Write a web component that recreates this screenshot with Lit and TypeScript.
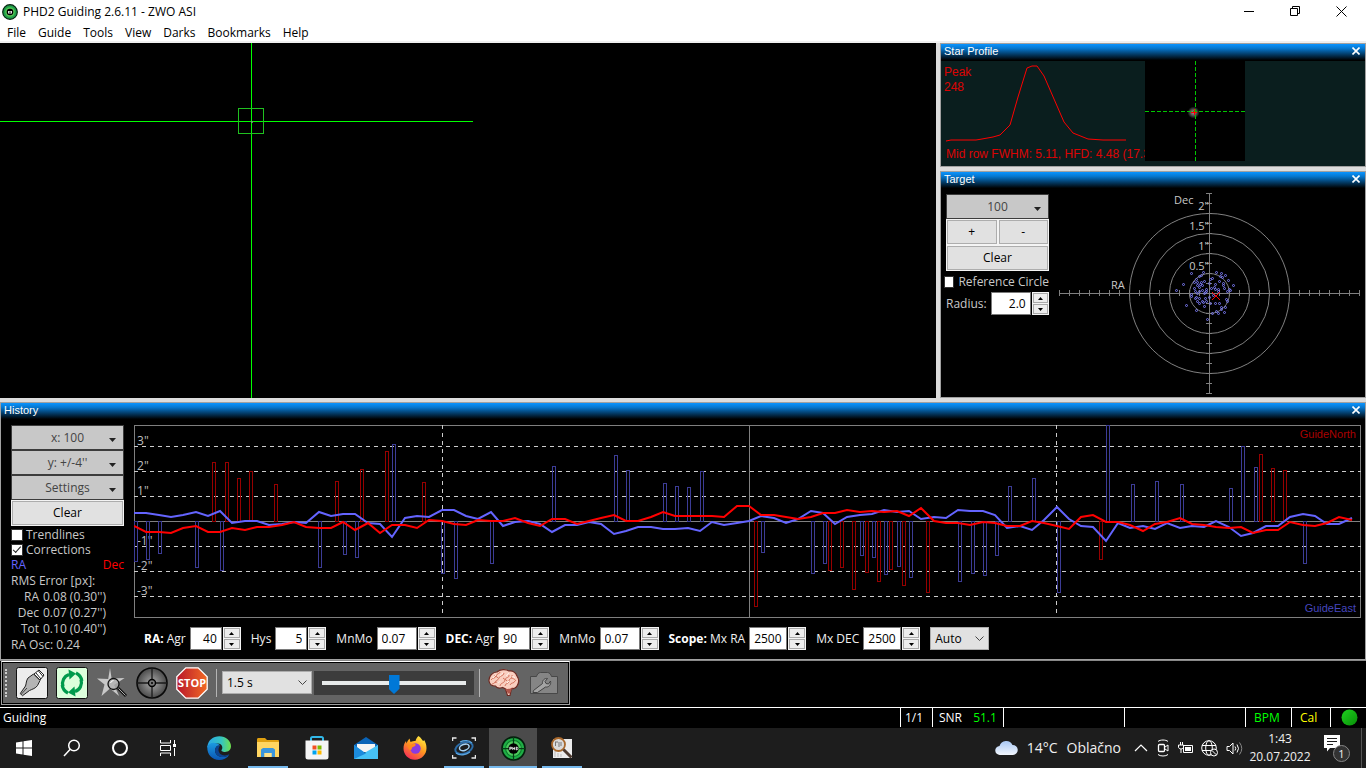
import { LitElement, html, svg, css } from "lit";
import { customElement, property } from "lit/decorators.js";

const base = css`
  *, *::before, *::after { box-sizing: border-box; }
  button, input, select { font: inherit; margin: 0; padding: 0; border-radius: 0; }
  svg { display: block; flex: none; }
`;

/* ---------- data ---------- */

const STEP = 12.3;
const RA = [88, 88, 90, 92, 90, 87, 91, 86, 98, 96, 96, 100, 99, 97, 98, 87, 91, 89, 89, 98, 99, 112, 93, 91, 92, 85, 85, 91, 94, 87, 101, 97, 96, 99, 107, 100, 100, 97, 99, 109, 106, 102, 102, 104, 104, 103, 106, 97, 100, 98, 96, 91, 93, 98, 94, 86, 88, 99, 92, 90, 89, 85, 87, 86, 94, 92, 93, 85, 86, 86, 90, 103, 101, 105, 95, 82, 94, 101, 102, 116, 98, 103, 101, 104, 98, 103, 101, 102, 96, 102, 111, 108, 101, 101, 92, 89, 91, 99, 99, 93];
const DEC = [101, 107, 107, 108, 103, 101, 107, 107, 103, 105, 102, 102, 100, 97, 102, 103, 103, 97, 105, 98, 108, 100, 100, 103, 95, 96, 99, 100, 95, 96, 96, 93, 98, 101, 94, 94, 99, 96, 93, 90, 96, 96, 92, 87, 91, 91, 91, 91, 92, 81, 81, 90, 90, 92, 94, 92, 88, 88, 85, 87, 86, 87, 86, 91, 83, 96, 98, 98, 100, 97, 98, 101, 101, 96, 98, 101, 104, 92, 90, 97, 97, 100, 106, 99, 97, 93, 99, 100, 102, 103, 102, 108, 105, 105, 97, 100, 101, 98, 92, 95];
const ZERO = 96;
const RA_PULSES: number[][] = [[0, 136], [12, 134], [24, 128], [61, 142], [86, 145], [184, 142], [209, 129], [221, 132], [307, 148], [320, 153], [356, 138], [258, 19], [418, 41], [480, 30], [492, 45], [529, 58], [541, 61], [553, 62], [566, 46], [627, 127], [677, 148], [689, 138], [726, 130], [738, 132], [750, 149], [763, 141], [775, 152], [824, 156], [837, 148], [849, 150], [861, 130], [874, 61], [898, 53], [972, 0], [997, 59], [1021, 56], [1046, 59], [1095, 63], [1107, 21], [1120, 42], [923, 167], [1169, 138]];
const DEC_PULSES: number[][] = [[78, 37], [91, 37], [103, 53], [115, 46], [140, 59], [201, 56], [226, 44], [251, 26], [288, 57], [620, 181], [694, 145], [706, 142], [718, 164], [731, 147], [743, 156], [755, 144], [768, 160], [792, 167], [965, 134], [1125, 29], [1137, 43], [1149, 45]];
const SCATTER: number[][] = [[-18, -20], [-6, -21], [7, -21], [12, -20], [16, -18], [-10, -17], [11, -17], [-13, -14], [3, -15], [-5, -12], [10, -12], [19, -13], [-12, -11], [-8, -11], [0, -10], [14, -10], [-26, -9], [-12, -8], [-7, -8], [6, -9], [24, -8], [14, -8], [-33, -3], [-15, -5], [-10, -6], [-3, -4], [2, -5], [6, -4], [9, -4], [15, -5], [20, -4], [-14, -2], [-10, -2], [-7, -3], [-3, -2], [9, -2], [18, -2], [-18, 1], [-12, 0], [-5, 0], [4, 2], [0, 4], [-18, 3], [-14, 5], [-10, 5], [-7, 8], [-4, 5], [17, 6], [-12, 8], [-10, 10], [-6, 9], [-3, 8], [-23, 12], [-5, 13], [1, 10], [6, 10], [10, 10], [16, 14], [12, 16], [-13, 17], [15, 19], [3, 20], [7, 18], [-2, 26], [12, 14], [9, 20], [-15, -11], [-4, -1], [18, 8], [13, -16], [1, -14], [5, -6], [-9, -9], [-13, 4], [-8, -18], [21, -3]];

const points = (ys: number[]) => ys.map((y, i) => `${Math.round(i * STEP)},${y}`).join(" ");
const pulses = (list: number[][], cls: string) =>
  list.map(([x, y]) => svg`<rect class=${cls} x=${x + 0.5} y=${Math.min(y, ZERO) + 0.5} width="3" height=${Math.abs(y - ZERO)}></rect>`);

/* ---------- small widgets ---------- */

@customElement("dock-panel")
export class DockPanel extends LitElement {
  @property() caption = "";
  static styles = [base, css`
    :host { display: flex; flex-direction: column; border: 1px solid #a0a0a0; background: #000; min-width: 0; }
    .bar { display: flex; align-items: center; justify-content: space-between; height: 17px; padding: 0 4px 3px 3px;
      background: linear-gradient(#0a94ff, #0678d0 25%, #000 95%); color: #fff; font: 11px/14px "Liberation Sans", sans-serif; }
    .close { border: 0; background: none; width: 10px; height: 10px; padding: 1px; }
    .body { flex: 1; min-height: 0; display: flex; }
  `];
  render() {
    return html`
      <div class="bar"><span>${this.caption}</span>
        <button class="close" aria-label="Close ${this.caption}">
          <svg width="8" height="8"><path d="M.5.5l7 7M7.5.5l-7 7" stroke="#fff" stroke-width="1.6"/></svg>
        </button></div>
      <div class="body"><slot></slot></div>`;
  }
}

@customElement("spin-box")
export class SpinBox extends LitElement {
  @property() label = "";
  @property() lead = "";
  @property() value = "";
  @property() size = "s";
  @property() align = "left";
  static styles = [base, css`
    :host { display: flex; align-items: center; }
    .label { white-space: nowrap; margin-right: 4px; }
    .lead { color: #fff; font-weight: 700; }
    .field { height: 23px; border: 1px solid #7a7a7a; background: #fff; color: #000; padding: 0 4px; outline: 0; }
    .s { width: 32px; } .m { width: 38px; } .l { width: 40px; }
    .right { text-align: right; }
    .spin { display: grid; grid-template-rows: 1fr 1fr; width: 18px; height: 23px; margin-left: 1px; background: #f4f4f4; padding: 1px; gap: 1px; }
    .step { border: 1px solid #a9a9a9; background: #ededed; display: grid; place-items: center; min-height: 0; }
  `];
  render() {
    return html`
      <label class="label" for="v">${this.lead ? html`<span class="lead">${this.lead}</span> ` : ""}${this.label}</label>
      <input id="v" class="field ${this.size} ${this.align}" .value=${this.value}>
      <span class="spin">
        <button class="step" aria-label="Increase"><svg width="5" height="3"><path d="M0 3L2.5 0 5 3z"/></svg></button>
        <button class="step" aria-label="Decrease"><svg width="5" height="3"><path d="M0 0L2.5 3 5 0z"/></svg></button>
      </span>`;
  }
}

/* ---------- icons ---------- */

const appLogo = html`<svg width="16" height="16" viewBox="0 0 16 16">
  <circle cx="8" cy="8" r="7.300" fill="#1f9e4a" stroke="#06240f" stroke-width="1.200"/>
  <circle cx="8" cy="8" r="4.800" fill="#52c552"/>
  <circle cx="8" cy="8" r="3.300" fill="#000"/>
  <path d="M6 7h4v2.500H6z" fill="#ddd"/><path d="M7.500 7.500h1v1.500h-1z"/></svg>`;
const phdLogo = html`<svg width="25" height="25" viewBox="0 0 24 24">
  <circle cx="12" cy="12" r="11" fill="#1fae45" stroke="#03200c" stroke-width="1.6"/>
  <circle cx="12" cy="12" r="7.6" fill="#4cc95c" stroke="#0a7a2c"/>
  <path d="M12 1v22M1 12h22" stroke="#063d16" stroke-width="1.2"/>
  <circle cx="12" cy="12" r="5" fill="#000"/>
  <path d="M8.5 10.5v3M8.5 10.8h1.6v1.4H8.5M11.3 10.5v3M13.2 10.5v3M11.3 12h2M14.8 10.6v2.8c2 0 2-2.8 0-2.8" stroke="#fff" stroke-width=".8" fill="none"/></svg>`;

const cableIcon = html`<svg width="32" height="32" viewBox="0 0 32 32">
  <rect x=".5" y=".5" width="31" height="31" rx="2" fill="#ececec" stroke="#111"/>
  <path d="M18 7L23 3l5 5-4 5z" fill="#fff" stroke="#222"/><path d="M20 6l5 6M22.500 4l4.500 5.500" stroke="#222"/>
  <path d="M17.500 7l6.500 6.500-2.500 5c-2 3-5 3.500-8 5l-7 5.200-2.200-2.200L9.500 19c1-3 .5-5 2.500-8z" fill="#b4b4b4" stroke="#222"/>
  <path d="M5 27.500l6-6.500" stroke="#444"/></svg>`;
const loopIcon = html`<svg width="32" height="32" viewBox="0 0 32 32">
  <rect x=".5" y=".5" width="31" height="31" rx="2" fill="#dcffdc" stroke="#111"/>
  <g fill="none" stroke="#009a4c" stroke-width="3.200"><path d="M7 19.500A9.500 9.500 0 0 1 13 7.500"/><path d="M20 6A10.300 10.300 0 0 1 25.800 14"/><path d="M12 26A10.300 10.300 0 0 1 6.200 18"/><path d="M25 12.500A9.500 9.500 0 0 1 19 24.500"/></g>
  <path d="M12.500 2.500l7.500 4-6.500 6zM19.500 29.500l-7.500-4 6.500-6z" fill="#009a4c"/></svg>`;
const starIcon = html`<svg width="32" height="32" viewBox="0 0 32 32">
  <path d="M14 1l1.600 10.500 13-.5-10.500 7 5 11L14 21.500 5.500 29l3-11.500L1 11.500l11.200.5z" fill="#c8c8c8"/>
  <path d="M22 21l8 8" stroke="#111" stroke-width="3"/><path d="M22.500 21.500l7 7" stroke="#aaa" stroke-width="1"/>
  <circle cx="17.500" cy="17" r="5.500" fill="#b0b0b0" fill-opacity=".8" stroke="#111" stroke-width="1.300"/>
  <path d="M14.500 16a3.500 3.500 0 0 1 3-2.500" stroke="#fff" fill="none"/></svg>`;
const aimIcon = html`<svg width="32" height="32" viewBox="0 0 32 32">
  <defs><radialGradient id="ag"><stop offset="0" stop-color="#aaa"/><stop offset="1" stop-color="#4a4a4a"/></radialGradient></defs>
  <circle cx="16" cy="16" r="15" fill="url(#ag)" stroke="#0a0a0a" stroke-width="1.600"/>
  <path d="M16 1v30M1 16h30" stroke="#1a1a1a" stroke-width="1.300"/>
  <circle cx="16" cy="16" r="3.500" fill="#777" stroke="#000" stroke-width="1.400"/><circle cx="16" cy="16" r="1" fill="#000"/></svg>`;
const stopIcon = html`<svg width="32" height="32" viewBox="0 0 32 32">
  <defs><linearGradient id="sg"><stop offset="0" stop-color="#b8172c"/><stop offset="1" stop-color="#f26a24"/></linearGradient></defs>
  <path d="M9.800.8h12.400l9 9v12.400l-9 9H9.800l-9-9V9.800z" fill="url(#sg)" stroke="#fff" stroke-width="1.300"/>
  <text x="16" y="20" text-anchor="middle" font-family="Open Sans, sans-serif" font-size="11" font-weight="700" fill="#fff">STOP</text></svg>`;
const brainIcon = html`<svg width="32" height="28" viewBox="0 0 32 28">
  <path d="M1 12C.5 7 5 3 9 3c3-3 9-3 12-1 4-.5 7 2 8 5 2 3 2 7 0 10-1 2-4 3-5.500 2.500L22 26.500h-2.500l-2-6.500-3-1.500c-3 1-6 .5-7-1.500C4 17 1.500 15 1 12z" fill="#f9cfc0" stroke="#6e2a22" stroke-width="1.200"/>
  <path d="M3 11c2-3 4-1 5-4s4-2 4-4M7 14c0-3 3-2 4-5s4-1 5-5M12 17c1-4 4-2 5-6s4-1 4-5M17 17c0-3 4-2 4-5s4-2 3-6M22 16c1-3 4-1 5-4M6 6c1 2 3 1 4 3M15 9c2 2 3 1 4 3M23 9c2 1 3 0 5 3M4 15c2 0 2-2 5-2" fill="none" stroke="#cf6a54" stroke-width=".9"/>
  <path d="M5 9c1-2 2-2 3-3M12 7c1-1 1-2 3-3M18 7c1 0 1-2 3-3M24 8c1-1 2 0 3 1M10 14c1-1 2-1 2-2M19 14l2-2" fill="none" stroke="#fff6f0"/>
  <path d="M17 19.500c3 1 7 0 9-2l-2.500 3-1.500 4h-2z" fill="#b0554a"/></svg>`;
const camIcon = html`<svg width="28" height="22" viewBox="0 0 28 22">
  <path d="M.5 4.500h6c.5-2 2-4 4-4h7c2 0 3.500 2 4 4h6v17H.5z" fill="#858585" stroke="#484848"/>
  <path d="M3.500 18.500l9-7c-.5-3 2-5.500 5-5l-2.500 3 1 2 2.500.5 2-3c1 4-2 6.500-5 6l-8 5.500H3z" fill="#a4a4a4" stroke="#424242"/></svg>`;

const task = {
  start: html`<svg width="18" height="18"><path d="M1 3.500l6.500-1v6H1zM8.500 2.300L17 1v7.500H8.500zM1 9.500h6.500v6l-6.500-1zM8.500 9.500H17V17l-8.500-1.300z" fill="#fff"/></svg>`,
  search: html`<svg width="18" height="18" fill="none" stroke="#fff" stroke-width="1.500"><circle cx="11" cy="6.500" r="5.300"/><path d="M7.200 10.300L1 17"/></svg>`,
  cortana: html`<svg width="18" height="18"><circle cx="9" cy="9" r="7" fill="none" stroke="#fff" stroke-width="2"/></svg>`,
  view: html`<svg width="18" height="18" fill="none" stroke="#fff"><path d="M1.500 1v3h10V1M1.500 17v-3h10v3M1.500 6.500h10v5h-10zM15.500 1v4M15.500 9v8"/><path d="M14 5h3v3h-3z" fill="#fff" stroke="none"/></svg>`,
  edge: html`<svg width="24" height="24"><defs><linearGradient id="e1" x1="0" x2="1"><stop offset="0" stop-color="#2aa7e8"/><stop offset=".6" stop-color="#35c5c0"/><stop offset="1" stop-color="#6fe04c"/></linearGradient><linearGradient id="e2" x2="0" y2="1"><stop offset="0" stop-color="#1c9be0"/><stop offset="1" stop-color="#0a55b5"/></linearGradient></defs>
    <path d="M.3 10.500C1.500 4 6 .3 12.300.3 19 .3 24 5 24 10.300c0 3.700-3 5.700-6 5.700-2.500 0-4.300-1-3.300-2.200 1.500-2 .5-6-3.700-6.300C6.500 7 1.500 8.500.3 12z" fill="url(#e1)"/>
    <path d="M.3 11C1 8.500 4 6.600 7.500 6.900 10 7 12 8 13 9.500c-2.500-.5-5 1.500-5 5 0 4 4 7 9 6.500 2-.2 3.500-.8 5-1.700-2 3.200-6 4.700-9.700 4.700C5 24 0 18.500.3 11z" fill="url(#e2)"/>
    <path d="M8 14.500c0 4 4 7 9 6.500 2-.2 3.500-.8 5-1.700.6-.7-.2-.9-1-.5-5 2-9-.5-9.500-4.500-.1-2 .6-3.500 1.500-4.800-2.500-.5-5 1.500-5 5z" fill="#0c4391"/></svg>`,
  folder: html`<svg width="22" height="20"><path d="M0 3V1.500C0 .7.500 0 1.500 0H8l2 2h11a1 1 0 0 1 1 1v3H0z" fill="#e0a010"/><path d="M0 4h22v15H0z" fill="#ffd561"/><path d="M4 19v-7.500L6 10h10l2 1.500V19h-3.500v-4h-7v4z" fill="#3a96dd"/><path d="M7.500 15h7v4h-7z" fill="#ffe28a"/></svg>`,
  store: html`<svg width="24" height="24"><path d="M6 5V2.500A1.500 1.500 0 0 1 7.500 1h9A1.500 1.500 0 0 1 18 2.500V5" fill="none" stroke="#32b8e8" stroke-width="2"/><path d="M.5 4.500h23V21a2.500 2.500 0 0 1-2.500 2.500H3A2.500 2.500 0 0 1 .5 21z" fill="#f5f5f5"/><path d="M7.500 9.500h4v4h-4z" fill="#f25022"/><path d="M12.500 9.500h4v4h-4z" fill="#7fba00"/><path d="M7.500 14.500h4v4h-4z" fill="#00a4ef"/><path d="M12.500 14.500h4v4h-4z" fill="#ffb900"/></svg>`,
  mail: html`<svg width="24" height="22"><path d="M0 8L12 0l12 8v4H0z" fill="#0a64b8"/><path d="M3 7h18v8H3z" fill="#f4f4f4"/><path d="M0 8l12 9L24 8v14H0z" fill="#2fa8ea"/><path d="M24 8v14H0z" fill="#46c2f6"/><path d="M0 22V8l12 8.500z" fill="#1c8bdc"/></svg>`,
  firefox: html`<svg width="24" height="24"><defs><linearGradient id="f1" x1=".8" y1="0" x2=".2" y2="1"><stop offset="0" stop-color="#fff044"/><stop offset=".45" stop-color="#ff9a1f"/><stop offset="1" stop-color="#f5245c"/></linearGradient></defs>
    <path d="M15.500 0c3 2 3.500 4 4.500 5 1-.2 1-.8 1-1.200 1.600 2.500 2.500 5 2.500 8.500C23.500 18.500 18.500 23.800 12 23.800S.5 18.500.5 12.500c0-3.500 1-5.500 2.500-7.500l.5 2.500C4.500 5.500 5 4 6.500 2.500L7.500 6c2-1 3-1 5-1 .5-2 1.500-4 3-5z" fill="url(#f1)"/>
    <circle cx="12.500" cy="12.500" r="5.200" fill="#8a3ae0"/><path d="M4 9c3 0 5 0 7-1.500 2 .2 2 1.500 1 2.500l-3 1.500c0 2-1 3-3 2z" fill="#ff8a1c"/></svg>`,
  asi: html`<svg width="24" height="22" fill="none"><path d="M.5 4V1h4M19.500 1h4v3M.5 18v3h4M19.500 21h4v-3" stroke="#e8e8e8" stroke-width="1.500"/><ellipse cx="12" cy="11" rx="9" ry="5.500" transform="rotate(-20 12 11)" stroke="#2b6ca8" stroke-width="2"/><ellipse cx="12.500" cy="10.500" rx="5" ry="3" transform="rotate(-20 12 11)" stroke="#a7d3f5" stroke-width="1.500"/><path d="M4 16c4 3 10 2 14-1M8 5c4-2 9-2 12 1" stroke="#5aa5e0" stroke-width="1.300"/></svg>`,
  log: html`<svg width="22" height="22"><path d="M2 2h19v19H2z" fill="#ececec"/><path d="M4 20V14M7 20v-4M10 20v-3" stroke="#bbb"/><circle cx="7.500" cy="7.500" r="6.500" fill="#d8d8d8" fill-opacity=".9" stroke="#a8682c" stroke-width="1.800"/><path d="M4.500 5v4M4 5h3M8 5v5M10 5v4" stroke="#777"/><path d="M12.500 12.500l8 8" stroke="#4c3a30" stroke-width="3"/></svg>`,
};

/* ---------- page ---------- */

@customElement("app-root")
export class AppRoot extends LitElement {
  static styles = [base, css`
    :host { display: flex; flex-direction: column; min-height: 100vh; background: #dcdcdc; color: #c8c8c8;
      font: 12px/16px "Open Sans", "Noto Sans", sans-serif; }

    .title { display: flex; align-items: center; height: 23px; background: #fff; color: #000; padding: 0 2px; }
    .title-text { flex: 1; margin-left: 5px; }
    .win { width: 46px; height: 22px; border: 0; background: none; display: grid; place-items: center; }
    .menu { display: flex; gap: 12px; height: 20px; padding: 0 7px; background: #fff; border-bottom: 2px solid #f0f0f0; }
    .menu-item { color: #000; text-decoration: none; line-height: 19px; }

    .work { flex: 1; display: grid; grid-template-columns: minmax(0, 1fr) 426px; gap: 4px; min-height: 355px; }
    .view { background: #000; width: 100%; height: 100%; }
    .side { display: grid; grid-template-rows: 124px minmax(0, 1fr); gap: 4px; }

    .profile { flex: 1; display: flex; background: #0a1e1e; color: #f00; font: 12px/15px "Liberation Sans", sans-serif; overflow: hidden; }
    .curve { position: relative; width: 204px; overflow: hidden; padding: 4px 3px; }
    .curve-svg { position: absolute; left: 0; top: 0; }
    .peak { opacity: .85; }
    .fwhm { position: absolute; left: 5px; top: 86px; white-space: nowrap; opacity: .85; }

    .target { flex: 1; display: flex; padding: 4px 4px 1px 5px; justify-content: space-between; }
    .tools { width: 103px; display: flex; flex-direction: column; padding-top: 1px; }
    .plot { overflow: visible; }
    .drop { display: flex; align-items: center; height: 25px; border: 1px solid #3c3c3c; background: #c8c8c8; color: #444; padding: 0 7px; }
    .drop-text { flex: 1; text-align: center; padding-left: 7px; }
    .caret { margin-top: 4px; }
    .push { height: 26px; border: 1px solid #f4f4f4; background: #e1e1e1; color: #000; box-shadow: inset 0 0 0 1px #adadad; }
    .pair { display: grid; grid-template-columns: 1fr 1fr; }
    .check { display: flex; align-items: center; gap: 4px; white-space: nowrap; height: 15px; }
    .target .check { margin: 3px 0 3px -2px; }
    .box { appearance: none; width: 12px; height: 12px; background: #fff; border: 1px solid #333; display: grid; place-items: center; }
    .box:checked::before { content: ""; width: 8px; height: 4px; border: solid #222; border-width: 0 0 1px 1px; transform: rotate(-48deg) translate(1px, -1px); }

    .history { margin-top: 4px; }
    .history-body { flex: 1; display: flex; padding: 5px 4px 6px 10px; gap: 10px; min-width: 0; }
    .left { width: 113px; display: flex; flex-direction: column; flex: none; }
    .left .check { gap: 3px; }
    .left .push { margin-bottom: 1px; }
    .names { display: flex; justify-content: space-between; }
    .ra { color: #6464ff; } .dec { color: #f00; }
    .stats { display: grid; grid-template-columns: 28px 1fr; column-gap: 4px; }
    .key { text-align: right; }
    .wide { grid-column: 1 / -1; }
    .right { flex: 1; min-width: 0; }
    .chart { position: relative; border: 1px solid #7f7f7f; height: 193px; }
    .chart-svg { position: absolute; inset: -1px; width: calc(100% + 2px); height: 193px; }
    .tick { position: absolute; left: 2px; line-height: 16px; color: #bebebe; }
    .north, .east { position: absolute; right: 4px; font: 11px/13px "Liberation Sans", sans-serif; }
    .north { top: 2px; color: #a00; } .east { bottom: 2px; color: #4646be; }
    .grid { stroke: #ccc; stroke-dasharray: 4 4; fill: none; }
    .ra-p { fill: none; stroke: #3c3c96; } .dec-p { fill: none; stroke: #960000; }
    .ra-l, .dec-l { fill: none; stroke-width: 2; }
    .ra-l { stroke: #6464ff; } .dec-l { stroke: #f00; }
    .params { display: flex; align-items: center; gap: 10px; padding: 9px 10px 0; color: #f0f0f0; }
    .pick { position: relative; display: block; }
    .select { appearance: none; width: 100%; height: 23px; border: 1px solid #adadad; background: #e1e1e1; color: #000; padding: 0 4px; outline: 0; }
    .chev { position: absolute; right: 5px; top: 9px; pointer-events: none; }
    .auto { width: 59px; } .exposure { width: 90px; }

    .toolrow { background: #000; border-top: 1px solid #888; height: 48px; padding: 0 0 2px 1px; border-bottom: 1px solid #fff; }
    .toolbar { display: inline-flex; align-items: center; height: 44px; border: 1px solid #a0a0a0; border-top-color: #fff;
      box-shadow: inset 0 0 0 1px #000; background: #646464; padding: 0 9px 0 3px; gap: 8px; }
    .grip { width: 3px; height: 28px; border-left: 2px dotted #ccc; }
    .tool { border: 0; background: none; width: 32px; height: 32px; display: grid; place-items: center; }
    .sep { width: 1px; height: 28px; background: #b4b4b4; }
    .combo { display: flex; gap: 2px; margin-left: -3px; margin-right: -3px; }
    .slide { width: 160px; height: 24px; background: #3c3c3c; display: grid; place-items: center; }
    .range { appearance: none; width: 144px; height: 20px; background: none; }
    .range::-webkit-slider-runnable-track { height: 4px; background: #e7eaea; }
    .range::-webkit-slider-thumb { appearance: none; width: 11px; height: 19px; margin-top: -6px; background: #0078d7; clip-path: polygon(0 0, 100% 0, 100% 72%, 50% 100%, 0 72%); }

    .status { display: flex; height: 20px; background: #000; color: #fff; line-height: 19px; padding-bottom: 1px; }
    .cell { border-left: 1px solid #fff; padding: 0 4px; white-space: nowrap; }
    .grow { flex: 1; border: 0; padding-left: 3px; }
    .count { width: 32px; } .snr { width: 71px; padding-left: 6px; } .empty { width: 121px; }
    .bpm { width: 46px; padding-left: 8px; } .cal { width: 39px; padding-left: 8px; } .lamp { width: 36px; padding: 1px 10px; }
    .green { color: #0f0; } .yellow { color: #ff0; }
    .snr .green { margin-left: 8px; }

    .taskbar { display: flex; height: 40px; background: #1d1d1d; color: #f0f0f0; }
    .apps { display: flex; flex: 1; }
    .app { width: 48px; height: 40px; border: 0; background: none; display: grid; place-items: center; }
    .pinned { display: flex; gap: 1px; margin-left: 3px; }
    .on { background: linear-gradient(#76b9ed, #76b9ed) center bottom / 40px 2px no-repeat; }
    .active { background: linear-gradient(#76b9ed, #76b9ed) center bottom / 48px 2px no-repeat #4b4b4b; }
    .tray { display: flex; align-items: center; gap: 7px; }
    .weather { display: flex; gap: 9px; align-items: center; font-size: 14px; margin-right: 6px; }
    .clock { text-align: center; line-height: 18px; width: 62px; margin: 0 5px 0 -1px; }
    .notes { position: relative; width: 27px; height: 28px; }
    .badge { position: absolute; right: 0; bottom: 0; width: 17px; height: 17px; border: 1px solid #888; border-radius: 50%; background: #333; font-size: 11px; line-height: 15px; text-align: center; }
    .peek { width: 1px; height: 40px; background: #555; margin: 0 4px; }
  `];

  drop(text: string) {
    return html`<button class="drop"><span class="drop-text">${text}</span><svg class="caret" width="7" height="4"><path d="M0 0h7L3.500 4z" fill="#222"/></svg></button>`;
  }

  pick(cls: string, id: string, label: string, value: string) {
    return html`<span class="pick ${cls}"><select class="select" id=${id} aria-label=${label}><option>${value}</option></select>
      <svg class="chev" width="9" height="6"><path d="M.5.5l4 4 4-4" fill="none" stroke="#444"/></svg></span>`;
  }

  guideView() {
    return html`<svg class="view" width="100%" height="100%">
      <path d="M0 78.500h473M251.500 0v2000" stroke="#0f0"/>
      <rect x="238.500" y="65.500" width="25" height="25" fill="none" stroke="#20c020"/>
      <circle cx="252" cy="79" r="1" fill="#888"/></svg>`;
  }

  profile() {
    return html`<div class="profile">
      <div class="curve">
        <svg class="curve-svg" width="204" height="105"><polyline points="5,80 10,79 35,79 41,78 52,76 59,74 69,64 77,36 86,7 91,5 96,5 103,15 113,38 123,61 132,72 147,78 162,79 185,79" fill="none" stroke="#f00"/></svg>
        <div class="peak">Peak<br>248</div>
        <div class="fwhm">Mid row FWHM: 5.11, HFD: 4.48 (17.3</div>
      </div>
      <svg width="100" height="100">
        <defs><radialGradient id="glow"><stop offset="0" stop-color="#999"/><stop offset=".5" stop-color="#555"/><stop offset="1" stop-color="#000"/></radialGradient></defs>
        <rect width="100" height="100"/><circle cx="48.500" cy="51.500" r="6" fill="url(#glow)"/>
        <path d="M0 50.500h100M50.500 0v100" stroke="#00c800" stroke-dasharray="4 2"/>
        <path d="M46 51.500h6M49.500 48v6" stroke="#f00"/></svg>
    </div>`;
  }

  targetPlot() {
    const ticks: unknown[] = [];
    for (let d = -150; d <= 150; d += 10) ticks.push(svg`<path d="M${150.5 + d} 97v6"/>`);
    for (let d = -100; d <= 100; d += 10) ticks.push(svg`<path d="M147 ${100.5 + d}h6"/>`);
    return html`<svg class="plot" width="302" height="201">
      <g fill="none" stroke="#808080"><path d="M0 100.500h301M150.500 0v201"/>${ticks}
        ${[20, 40, 60, 80].map((r) => svg`<circle cx="150.500" cy="100.500" r=${r}></circle>`)}</g>
      <g fill="none" stroke="#7878f0">${SCATTER.map(([x, y]) => svg`<circle cx=${150.5 + x} cy=${100.5 + y} r="1"></circle>`)}</g>
      <path d="M153 99l8 8M161 99l-8 8" stroke="#f00"/>
      <g fill="#c8c8c8" font-family="Open Sans, sans-serif" font-size="11">
        <text x="115" y="11">Dec</text><text x="52" y="96">RA</text>
        <g text-anchor="end"><text x="150" y="17">2"</text><text x="150" y="37">1.5"</text><text x="150" y="57">1"</text><text x="150" y="77">0.5"</text></g>
      </g></svg>`;
  }

  chart() {
    return html`<div class="chart">
      ${[3, 2, 1, -1, -2, -3].map((n) => html`<span class="tick" style="top:${82 - 25 * n}px">${n}"</span>`)}
      <svg class="chart-svg" viewBox="0 0 1227 193" preserveAspectRatio="none">
        ${[21, 46, 71, 121, 146, 171].map((y) => svg`<path class="grid" d="M0 ${y + 0.5}h1227"></path>`)}
        <path class="grid" d="M308.500 0v190M922.500 0v190"/>
        <path d="M0 96.500h1227M615.500 0v193" stroke="#808080"/>
        ${pulses(RA_PULSES, "ra-p")}${pulses(DEC_PULSES, "dec-p")}
        <polyline class="ra-l" points=${points(RA)}></polyline>
        <polyline class="dec-l" points=${points(DEC)}></polyline>
      </svg>
      <span class="north">GuideNorth</span><span class="east">GuideEast</span>
    </div>`;
  }

  render() {
    return html`
      <header class="title">${appLogo}<span class="title-text">PHD2 Guiding 2.6.11 - ZWO ASI</span>
        <button class="win" aria-label="Minimize"><svg width="11" height="11"><path d="M0 5.500h10" stroke="#000"/></svg></button>
        <button class="win" aria-label="Restore"><svg width="11" height="11" fill="none" stroke="#000"><path d="M.5 2.500h7v7h-7zM2.500 2.500v-2h7v7h-2"/></svg></button>
        <button class="win" aria-label="Close"><svg width="11" height="11"><path d="M.5.5l10 10M10.500.5l-10 10" stroke="#000"/></svg></button>
      </header>
      <nav class="menu">${["File", "Guide", "Tools", "View", "Darks", "Bookmarks", "Help"].map((t) => html`<a class="menu-item" href="#">${t}</a>`)}</nav>

      <main class="work">
        ${this.guideView()}
        <div class="side">
          <dock-panel caption="Star Profile">${this.profile()}</dock-panel>
          <dock-panel caption="Target">
            <div class="target">
              <div class="tools">
                ${this.drop("100")}
                <div class="pair"><button class="push">+</button><button class="push">-</button></div>
                <button class="push">Clear</button>
                <label class="check"><input class="box" type="checkbox">Reference Circle</label>
                <spin-box label="Radius:" value="2.0" size="l" align="right"></spin-box>
              </div>
              ${this.targetPlot()}
            </div>
          </dock-panel>
        </div>
      </main>

      <dock-panel class="history" caption="History">
        <div class="history-body">
          <div class="left">
            ${this.drop("x: 100")}${this.drop("y: +/-4''")}${this.drop("Settings")}
            <button class="push">Clear</button>
            <label class="check"><input class="box" type="checkbox">Trendlines</label>
            <label class="check"><input class="box" type="checkbox" checked>Corrections</label>
            <div class="names"><span class="ra">RA</span><span class="dec">Dec</span></div>
            <div class="stats">
              <span class="wide">RMS Error [px]:</span>
              <span class="key">RA</span><span>0.08 (0.30'')</span>
              <span class="key">Dec</span><span>0.07 (0.27'')</span>
              <span class="key">Tot</span><span>0.10 (0.40'')</span>
              <span class="wide">RA Osc: 0.24</span>
            </div>
          </div>
          <div class="right">
            ${this.chart()}
            <div class="params">
              <spin-box lead="RA:" label="Agr" value="40" align="right"></spin-box>
              <spin-box label="Hys" value="5" align="right"></spin-box>
              <spin-box label="MnMo" value="0.07" size="l"></spin-box>
              <spin-box lead="DEC:" label="Agr" value="90"></spin-box>
              <spin-box label="MnMo" value="0.07" size="l"></spin-box>
              <spin-box lead="Scope:" label="Mx RA" value="2500" size="m"></spin-box>
              <spin-box label="Mx DEC" value="2500" size="m"></spin-box>
              ${this.pick("auto", "mode", "Declination guide mode", "Auto")}
            </div>
          </div>
        </div>
      </dock-panel>

      <div class="toolrow"><div class="toolbar">
        <span class="grip"></span>
        <button class="tool" aria-label="Connect">${cableIcon}</button>
        <button class="tool" aria-label="Loop">${loopIcon}</button>
        <button class="tool" aria-label="Auto-select star">${starIcon}</button>
        <button class="tool" aria-label="Guide">${aimIcon}</button>
        <button class="tool" aria-label="Stop">${stopIcon}</button>
        <span class="sep"></span>
        <div class="combo">${this.pick("exposure", "exp", "Exposure", "1.5 s")}
          <span class="slide"><input class="range" type="range" min="0" max="100" value="50" aria-label="Stretch"></span></div>
        <span class="sep"></span>
        <button class="tool" aria-label="Advanced settings">${brainIcon}</button>
        <button class="tool" aria-label="Camera settings">${camIcon}</button>
      </div></div>

      <footer class="status">
        <span class="cell grow">Guiding</span><span class="cell count">1/1</span>
        <span class="cell snr">SNR <span class="green">51.1</span></span>
        <span class="cell empty"></span><span class="cell empty"></span>
        <span class="cell bpm green">BPM</span><span class="cell cal yellow">Cal</span>
        <span class="cell lamp"><svg width="17" height="17"><defs><linearGradient id="lg" x2="1" y2="1"><stop offset="0" stop-color="#1fd01f"/><stop offset="1" stop-color="#089008"/></linearGradient></defs><circle cx="8.500" cy="8.500" r="8" fill="url(#lg)"/></svg></span>
      </footer>

      <div class="taskbar">
        <div class="apps">
          <button class="app" aria-label="Start">${task.start}</button><button class="app" aria-label="Search">${task.search}</button>
          <button class="app" aria-label="Cortana">${task.cortana}</button><button class="app" aria-label="Task view">${task.view}</button>
          <div class="pinned">
            <button class="app" aria-label="Edge">${task.edge}</button><button class="app on" aria-label="Explorer">${task.folder}</button>
            <button class="app" aria-label="Store">${task.store}</button><button class="app" aria-label="Mail">${task.mail}</button>
            <button class="app" aria-label="Firefox">${task.firefox}</button><button class="app on" aria-label="ASI Studio">${task.asi}</button>
            <button class="app active" aria-label="PHD2">${phdLogo}</button><button class="app on" aria-label="Log viewer">${task.log}</button>
          </div>
        </div>
        <div class="tray">
          <div class="weather">
            <svg width="23" height="16"><defs><linearGradient id="cl" x2="0" y2="1"><stop offset="0" stop-color="#a9c8f4"/><stop offset="1" stop-color="#f2f6fd"/></linearGradient></defs><path d="M5 15a4.500 4.500 0 0 1-.5-9A7 7 0 0 1 17.500 5 5 5 0 0 1 18 15z" fill="url(#cl)"/></svg>
            <span>14°C</span><span>Oblačno</span></div>
          <svg width="14" height="16" fill="none" stroke="#fff" stroke-width="1.200"><path d="M1 11l6-6 6 6"/></svg>
          <svg width="16" height="18" fill="none" stroke="#fff"><path d="M3 2.500c2-2 8-2 10 0M3 15.500c2 2 8 2 10 0"/><rect x="3.500" y="5.500" width="6" height="7" rx="1" stroke-width="1.300"/><path d="M10 8l3-2v6l-3-2"/></svg>
          <svg width="16" height="16" fill="none" stroke="#fff"><path d="M5.500 5.500h9v7h-9zM2.500 2v3M.5 5h5v2c0 1-1 2-2.500 2S.5 8 .5 7zM3 9v4M4.500 2v3"/><path d="M7 7h6v4H7z" fill="#fff" stroke="none"/></svg>
          <svg width="18" height="17" fill="none" stroke="#fff"><circle cx="8" cy="8" r="7.300"/><ellipse cx="8" cy="8" rx="3.300" ry="7.300"/><path d="M1 5.500h14M1 10.500h9"/><circle cx="13" cy="12.500" r="3.500" fill="#1d1d1d"/><path d="M10.700 10.200l4.600 4.600"/></svg>
          <svg width="17" height="15" fill="none" stroke="#fff"><path d="M1 5.500h2.500L7 2v11L3.500 9.500H1zM9 5.500q1.500 2 0 4M11 3.500q3 4 0 8"/><path d="M13.500 1.500q4.500 6 0 12" stroke="#888"/></svg>
          <div class="clock">1:43<br>20.07.2022</div>
          <div class="notes"><svg width="20" height="20"><path d="M1 1h16v13H7l-3 3.500V14H1z" fill="#fff"/><path d="M4 4.500h10M4 7.500h10M4 10.500h6" stroke="#1d1d1d"/></svg><span class="badge">1</span></div>
          <span class="peek"></span>
        </div>
      </div>`;
  }
}
